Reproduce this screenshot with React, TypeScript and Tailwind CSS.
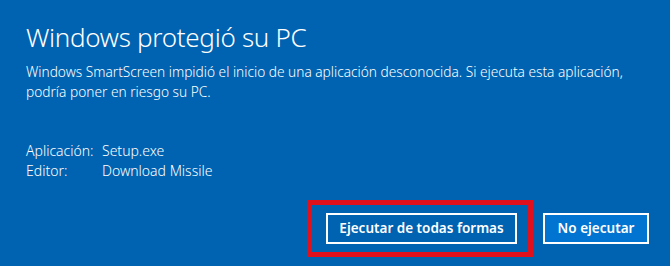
import React from 'react'

export default function App() {
  return (
    <div
      className="w-[670px] h-[266px] bg-[#0063b1] text-white flex flex-col pl-[26px] pr-[20px] pt-[20px] overflow-hidden"
      style={{ fontFamily: '"Noto Sans", "Open Sans", sans-serif' }}
    >
      <h1 className="text-[26px] font-light leading-[34px] tracking-[-0.3px]">Windows protegió su PC</h1>
      <p className="mt-[8px] text-[13.7px] leading-[20px] font-light">
        Windows SmartScreen impidió el inicio de una aplicación desconocida. Si ejecuta esta aplicación,
        <br />
        podría poner en riesgo su PC.
      </p>

      <div className="mt-[39px] text-[14px] leading-[20px] font-light">
        <div className="flex">
          <span className="w-[76px]">Aplicación:</span>
          <span>Setup.exe</span>
        </div>
        <div className="flex">
          <span className="w-[76px]">Editor:</span>
          <span>Download Missile</span>
        </div>
      </div>

      <div className="mt-[19px] flex justify-end items-center gap-[10px] pr-[1px]">
        <div className="border-[5px] border-[#e0101c] pt-[8px] pb-[8px] pl-[14px] pr-[11px]">
          <button className="h-[31px] w-[191px] border-2 border-white bg-[#0063b1] text-[13.5px] font-semibold">
            Ejecutar de todas formas
          </button>
        </div>
        <button className="h-[31px] w-[106px] border-2 border-white bg-[#0173d0] text-[13.5px] font-semibold">
          No ejecutar
        </button>
      </div>
    </div>
  )
}
